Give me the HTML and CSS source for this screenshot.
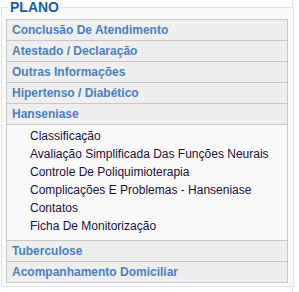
FILE: index.html
```html
<!DOCTYPE html>
<html lang="pt-BR">
<head>
    <meta charset="UTF-8">
    <title>Plano</title>
    <link rel="stylesheet" href="styles.css">
</head>
<body>
    <div class="painel">
        <fieldset class="plano">
            <legend>PLANO</legend>

            <!-- Menu do plano -->
            <ul class="menu">
                <li class="menu-item">Conclusão De Atendimento</li>
                <li class="menu-item">Atestado / Declaração</li>
                <li class="menu-item">Outras Informações</li>
                <li class="menu-item">Hipertenso / Diabético</li>
                <li class="menu-item">Hanseniase</li>
                <li class="submenu">
                    <ul>
                        <li>Classificação</li>
                        <li>Avaliação Simplificada Das Funções Neurais</li>
                        <li>Controle De Poliquimioterapia</li>
                        <li>Complicações E Problemas - Hanseniase</li>
                        <li>Contatos</li>
                        <li>Ficha De Monitorização</li>
                    </ul>
                </li>
                <li class="menu-item">Tuberculose</li>
                <li class="menu-item">Acompanhamento Domiciliar</li>
            </ul>
        </fieldset>
    </div>
</body>
</html>
```

FILE: styles.css
```css
body {
    margin: 0;
    padding: 0;
    background-color: #ffffff;
    font-family: "Liberation Sans", Arial, sans-serif;
}
.painel {
    width: 292px;
    padding-bottom: 6px;
    border-right: 1px solid #dae4f6;
}
.plano {
    margin: 0 -2px 0 1px;
    padding: 4px 5px 3px 4px;
    border: 1px solid #dae4f6;
    background-color: #f9f9f9;
}
.plano legend {
    padding: 0 2px;
    margin-left: 2px;
    font-size: 14px;
    font-weight: bold;
    line-height: 15px;
    color: #1b5ea8;
}
.menu {
    list-style: none;
    margin: 0;
    padding: 0;
    border: 1px solid #c8c8c8;
}
.menu-item {
    height: 20px;
    line-height: 20px;
    padding-left: 5px;
    background-color: #eeeeee;
    border-top: 1px solid #c8c8c8;
    font-size: 12px;
    font-weight: bold;
    color: #4a80c2;
}
.menu-item:first-child {
    border-top: none;
}
.submenu {
    border-top: 1px solid #c8c8c8;
    background-color: #f9f9f9;
}
.submenu ul {
    list-style: none;
    margin: 0;
    padding: 2px 0 5px 23px;
}
.submenu li {
    line-height: 18px;
    font-size: 12px;
    color: #1b1040;
}
```
